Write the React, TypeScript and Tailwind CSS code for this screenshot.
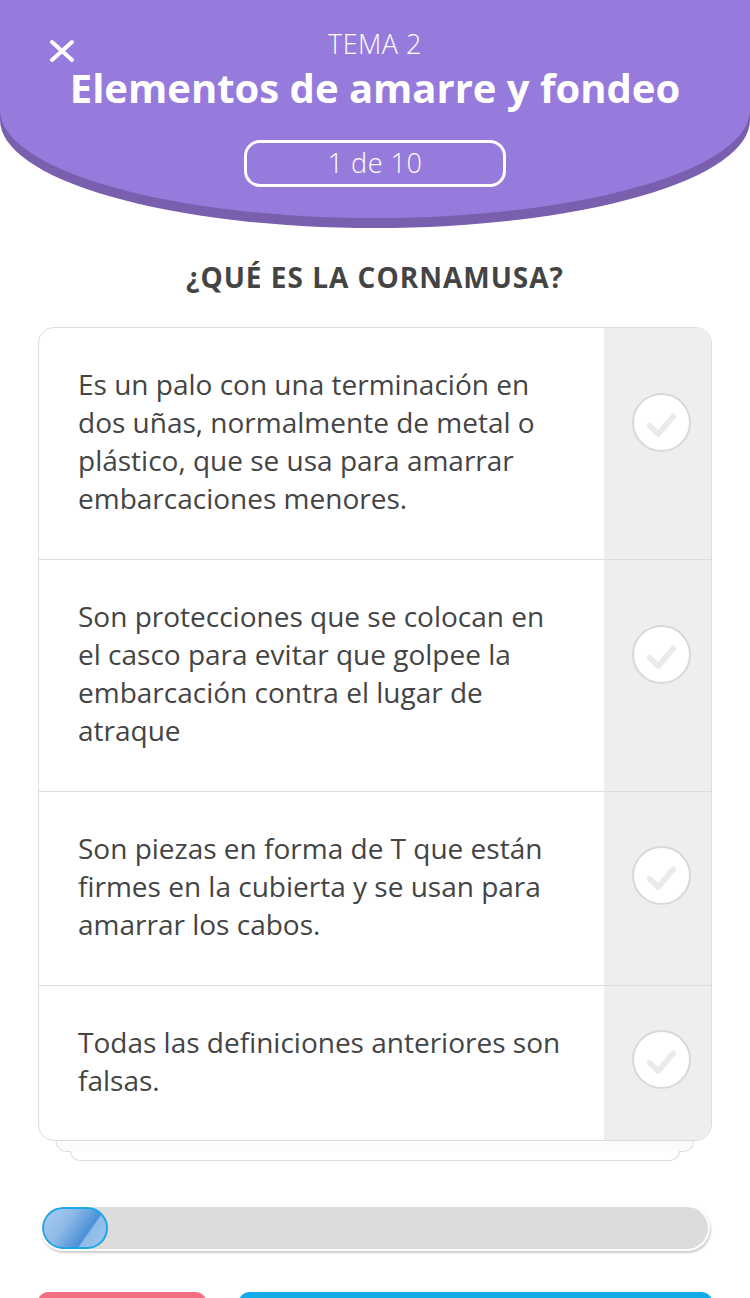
import React from 'react';

interface Option {
  id: number;
  text: string;
  height: string;
  checkTop: string;
}

const options: Option[] = [
  { id: 1, text: "Es un palo con una terminación en dos uñas, normalmente de metal o plástico, que se usa para amarrar embarcaciones menores.", height: "h-[231px]", checkTop: "pt-[65px]" },
  { id: 2, text: "Son protecciones que se colocan en el casco para evitar que golpee la embarcación contra el lugar de atraque", height: "h-[232px]", checkTop: "pt-[65px]" },
  { id: 3, text: "Son piezas en forma de T que están firmes en la cubierta y se usan para amarrar los cabos.", height: "h-[194px]", checkTop: "pt-[54px]" },
  { id: 4, text: "Todas las definiciones anteriores son falsas.", height: "h-[155px]", checkTop: "pt-[44px]" },
];

function CheckCircle() {
  return (
    <div className="w-[59px] h-[59px] rounded-full bg-white border-2 border-[#d8d8d8] flex items-center justify-center">
      <svg width="59" height="59" viewBox="0 0 59 59">
        <path d="M17 33 L26 42 L42 23" fill="none" stroke="#eaeaea" strokeWidth="6" strokeLinecap="round" strokeLinejoin="round" />
      </svg>
    </div>
  );
}

export default function App() {
  return (
    <div className="w-[750px] h-[1298px] bg-white overflow-hidden relative" style={{ fontFamily: '"Open Sans", sans-serif' }}>
      {/* Header */}
      <div className="h-[218px] bg-[#967bdc] rounded-bl-[375px_108px] rounded-br-[375px_108px] shadow-[0_10px_0_#7a5fae] relative flex flex-col items-center">
        <svg className="absolute left-[48px] top-[39px]" width="28" height="24" viewBox="0 0 28 24">
          <path d="M4 3 L24 21 M24 3 L4 21" stroke="white" strokeWidth="4" strokeLinecap="round" />
        </svg>
        <div className="mt-[29px] text-white text-[27px] leading-[30px] font-light tracking-[0.5px]">TEMA 2</div>
        <div className="mt-[7px] text-white text-[40px] leading-[44px] font-bold">Elementos de amarre y fondeo</div>
        <div className="mt-[30px] w-[262px] h-[47px] border-[3px] border-white rounded-[16px] flex items-center justify-center text-white text-[27px] font-light tracking-[0.5px]">
          1 de 10
        </div>
      </div>

      {/* Question */}
      <div className="mt-[41px] text-center text-[#444] text-[28px] font-bold tracking-[1px] leading-[36px]">¿QUÉ ES LA CORNAMUSA?</div>

      {/* Options card */}
      <div className="mt-[32px] mx-[38px] relative">
        <div className="relative z-10 border-[1.5px] border-[#dcdcdc] rounded-[16px] bg-white overflow-hidden">
          {options.map((o, i) => (
            <div key={o.id} className={`flex ${o.height} ${i > 0 ? 'border-t-[1.5px] border-[#dcdcdc]' : ''}`}>
              <div className="flex-1 flex items-center pl-[39px] pr-[37px] pb-[5px] text-[28px] leading-[38px] text-[#444]">
                {o.text}
              </div>
              <div className={`w-[107px] bg-[#eeeeee] flex justify-center pl-[8px] ${o.checkTop}`}>
                <CheckCircle />
              </div>
            </div>
          ))}
        </div>
        <div className="mx-[18px] h-[12px] -mt-[1px] border-[1.5px] border-t-0 border-[#dcdcdc] rounded-b-[10px] bg-[#fbfbfb]" />
        <div className="mx-[32px] h-[10px] -mt-[1px] border-[1.5px] border-t-0 border-[#dcdcdc] rounded-b-[10px] bg-white" />
      </div>

      {/* Progress */}
      <div className="mt-[44px] mx-[40px] h-[46px] rounded-full bg-white p-[2px] shadow-[1px_2px_2px_rgba(0,0,0,0.2)]">
        <div className="h-full w-full rounded-full bg-[#dcdcdc] overflow-hidden">
          <div className="h-full w-[66px] rounded-full border-2 border-[#1aa7e8] bg-[linear-gradient(125deg,#a9cbee_0%,#8fbbe8_35%,#5b9bdb_60%,#4a90d6_68%,#8cbbe8_70%,#a3c8ec_100%)]" />
        </div>
      </div>

      {/* Bottom buttons */}
      <div className="absolute left-0 right-0 top-[1292px] flex px-[38px] gap-[33px]">
        <div className="w-[168px] h-[40px] rounded-t-[10px] bg-[#f26f82]" />
        <div className="flex-1 h-[40px] rounded-t-[10px] bg-[#14abe9]" />
      </div>
    </div>
  );
}
